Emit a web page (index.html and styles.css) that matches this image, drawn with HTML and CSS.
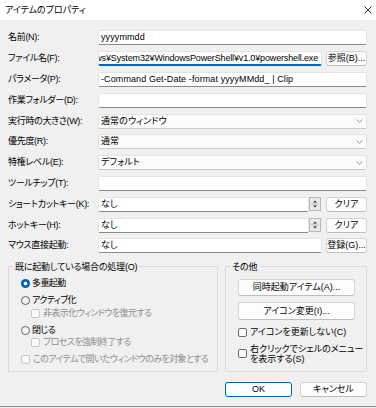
FILE: index.html
```html
<!DOCTYPE html>
<html lang="ja">

<head>
    <meta charset="UTF-8">
    <meta name="viewport" content="width=device-width, initial-scale=1.0">
    <title>アイテムのプロパティ</title>
    <link rel="stylesheet" href="styles.css">
</head>

<body>
    <div class="window">
        <div class="titlebar">
            <span class="title">アイテムのプロパティ</span>
            <svg class="close" width="8" height="8" viewBox="0 0 8 8">
                <path d="M0.5 0.5L7.5 7.5M7.5 0.5L0.5 7.5" stroke="#1b1b1b" stroke-width="0.9" fill="none" />
            </svg>
        </div>

        <div class="content">
            <div class="form">
                <div class="row">
                    <label>名前(N):</label>
                    <div class="field"><span>yyyymmdd</span></div>
                </div>
                <div class="row">
                    <label>ファイル名(F):</label>
                    <div class="field focus path"><span>ws¥System32¥WindowsPowerShell¥v1.0¥powershell.exe</span></div>
                    <button class="btn side">参照(B)...</button>
                </div>
                <div class="row">
                    <label>パラメータ(P):</label>
                    <div class="field"><span>-Command Get-Date -format yyyyMMdd_ | Clip</span></div>
                </div>
                <div class="row">
                    <label>作業フォルダー(D):</label>
                    <div class="field"></div>
                </div>
                <div class="row">
                    <label>実行時の大きさ(W):</label>
                    <div class="field select"><span>通常のウィンドウ</span>
                        <svg class="chev" width="7" height="4" viewBox="0 0 7 4"><path d="M0.5 0.5L3.5 3.3L6.5 0.5" stroke="#8a8a8a" stroke-width="0.9" fill="none" /></svg>
                    </div>
                </div>
                <div class="row">
                    <label>優先度(R):</label>
                    <div class="field select"><span>通常</span>
                        <svg class="chev" width="7" height="4" viewBox="0 0 7 4"><path d="M0.5 0.5L3.5 3.3L6.5 0.5" stroke="#8a8a8a" stroke-width="0.9" fill="none" /></svg>
                    </div>
                </div>
                <div class="row">
                    <label>特権レベル(E):</label>
                    <div class="field select"><span>デフォルト</span>
                        <svg class="chev" width="7" height="4" viewBox="0 0 7 4"><path d="M0.5 0.5L3.5 3.3L6.5 0.5" stroke="#8a8a8a" stroke-width="0.9" fill="none" /></svg>
                    </div>
                </div>
                <div class="row">
                    <label>ツールチップ(T):</label>
                    <div class="field"></div>
                </div>
                <div class="row">
                    <label>ショートカットキー(K):</label>
                    <div class="field"><span>なし</span></div>
                    <div class="spin">
                        <svg width="10" height="12" viewBox="0 0 10 12">
                            <path d="M5 2.5L7 4.5H3Z" fill="#333" />
                            <path d="M1 6H9" stroke="#b4b4b4" stroke-width="0.8" />
                            <path d="M5 9.5L7 7.5H3Z" fill="#333" />
                        </svg>
                    </div>
                    <button class="btn side after-spin">クリア</button>
                </div>
                <div class="row">
                    <label>ホットキー(H):</label>
                    <div class="field"><span>なし</span></div>
                    <div class="spin">
                        <svg width="10" height="12" viewBox="0 0 10 12">
                            <path d="M5 2.5L7 4.5H3Z" fill="#333" />
                            <path d="M1 6H9" stroke="#b4b4b4" stroke-width="0.8" />
                            <path d="M5 9.5L7 7.5H3Z" fill="#333" />
                        </svg>
                    </div>
                    <button class="btn side after-spin">クリア</button>
                </div>
                <div class="row">
                    <label>マウス直接起動:</label>
                    <div class="field"><span>なし</span></div>
                    <button class="btn side">登録(G)...</button>
                </div>
            </div>

            <div class="groups">
                <fieldset class="group running">
                    <legend>既に起動している場合の処理(O)</legend>
                    <div class="opts">
                        <div class="opt"><span class="radio on"></span>多重起動</div>
                        <div class="opt"><span class="radio"></span>アクティブ化</div>
                        <div class="opt sub off"><span class="check"></span>非表示化ウィンドウを復元する</div>
                        <div class="opt"><span class="radio"></span>閉じる</div>
                        <div class="opt sub off"><span class="check"></span>プロセスを強制終了する</div>
                        <div class="opt off"><span class="check"></span>このアイテムで開いたウィンドウのみを対象とする</div>
                    </div>
                </fieldset>

                <fieldset class="group others">
                    <legend>その他</legend>
                    <div class="opts">
                        <button class="btn wide">同時起動アイテム(A)...</button>
                        <button class="btn wide">アイコン変更(I)...</button>
                        <div class="opt line"><span class="check live"></span>アイコンを更新しない(C)</div>
                        <div class="opt line two"><span class="check live"></span><span>右クリックでシェルのメニュー<br>を表示する(S)</span></div>
                    </div>
                </fieldset>
            </div>

            <div class="actions">
                <button class="btn default">OK</button>
                <button class="btn">キャンセル</button>
            </div>
        </div>
    </div>
</body>

</html>
```

FILE: styles.css
```css
* {
    box-sizing: border-box;
}

body {
    margin: 0;
    background: #f0f0f0;
    color: #000;
    font-family: "Liberation Sans", "Noto Sans CJK JP", sans-serif;
    font-size: 9px;
    line-height: 11px;
    font-feature-settings: "palt";
}

.window {
    width: 376px;
    height: 407px;
    border-bottom: 1px solid #8f8f8f;
}

.titlebar {
    height: 20px;
    background: #fff;
    display: flex;
    align-items: center;
    justify-content: space-between;
    padding: 0 4px 0 5px;
}

.content {
    padding: 7.6px 9px 0 8px;
}

.row {
    display: flex;
    align-items: center;
    height: 20.8px;
}

.row label {
    width: 90px;
    flex: none;
    letter-spacing: -0.3px;
}

.field {
    flex: 1;
    min-width: 0;
    height: 15px;
    display: flex;
    align-items: center;
    padding: 0 2px;
    background: #fff;
    border: 1px solid #e4e4e4;
    border-bottom-color: #8a8a8a;
    border-radius: 2px;
    overflow: hidden;
    white-space: nowrap;
    letter-spacing: 0.1px;
}

.field.focus {
    border-bottom: 2px solid #0067c0;
}

.field.path {
    justify-content: flex-end;
    letter-spacing: -0.15px;
    padding-right: 3px;
}

.field.select {
    justify-content: space-between;
    background: #fbfbfb;
    border-color: #e2e2e2;
    border-bottom-color: #c9c9c9;
    padding-right: 3px;
}

.spin {
    flex: none;
    width: 12px;
    height: 14px;
    display: flex;
    align-items: center;
    justify-content: center;
    background: #e9e9e9;
    border: 1px solid #b9b9b9;
}

.btn {
    font: inherit;
    font-feature-settings: "palt";
    color: #000;
    height: 15px;
    padding: 0;
    background: #fdfdfd;
    border: 1px solid #d3d3d3;
    border-bottom-color: #bdbdbd;
    border-radius: 3px;
}

.side {
    flex: none;
    width: 41px;
    margin-left: 4px;
}

.side.after-spin {
    margin-left: 5px;
}

.groups {
    display: flex;
    gap: 7px;
    margin-top: 4.6px;
}

.group {
    margin: 0;
    padding: 0;
    height: 111px;
    border: 1px solid #dcdcdc;
}

.group legend {
    margin-left: 4px;
    padding: 0 2px;
    line-height: 12px;
    letter-spacing: -0.2px;
}

.running {
    width: 210px;
}

.others {
    width: 142px;
}

.running .opts {
    padding: 5.5px 0 0 12px;
}

.opt {
    display: flex;
    align-items: center;
    height: 11px;
    margin-top: 6px;
    white-space: nowrap;
}

.running .opt {
    letter-spacing: -0.6px;
}

.opt:first-child {
    margin-top: 0;
}

.opt.sub {
    padding-left: 10px;
    margin-top: 1.5px;
}

.opt.off {
    color: #8d8d8d;
}

.radio {
    flex: none;
    width: 9px;
    height: 9px;
    margin-right: 2px;
    border-radius: 50%;
    border: 1px solid #5f5f5f;
    background: #f6f6f6;
}

.radio.on {
    border: none;
    background: radial-gradient(circle, #fff 0 1.7px, #005fb8 2.2px);
}

.check {
    flex: none;
    width: 9px;
    height: 9px;
    margin-right: 3px;
    border: 1px solid #c6c6c6;
    border-radius: 2px;
    background: #fbfbfb;
}

.check.live {
    border-color: #6b6b6b;
    background: #fff;
}

.others .opts {
    display: flex;
    flex-direction: column;
    align-items: flex-start;
    padding: 6px 0 0 12px;
}

.wide {
    width: 117px;
    height: 17.5px;
}

.wide + .wide {
    margin-top: 6px;
}

.opt.line {
    margin-top: 7px;
}

.opt.line.two {
    margin-top: 6px;
    height: 20px;
    line-height: 10px;
}

.actions {
    display: flex;
    justify-content: flex-end;
    gap: 8px;
    margin-top: 10px;
}

.actions .btn {
    width: 67px;
}

.btn.default {
    border: 1px solid #005fb8;
}
```
